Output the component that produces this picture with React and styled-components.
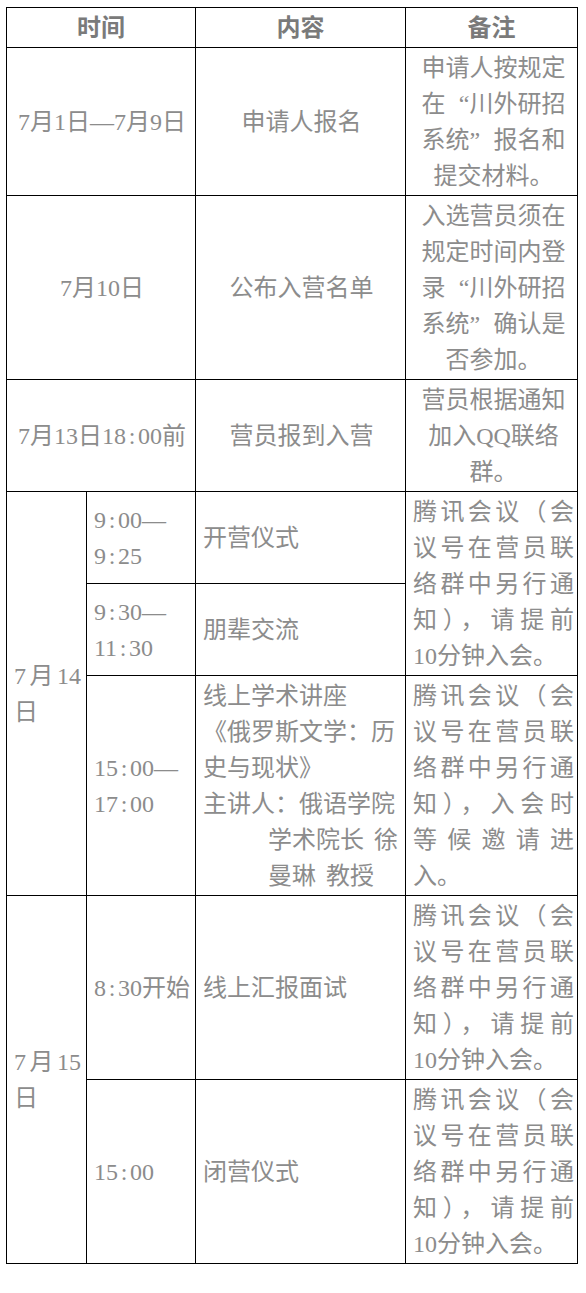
import React from "react";
import styled, { createGlobalStyle } from "styled-components";

const GlobalStyle = createGlobalStyle`
  body {
    margin: 0;
    background: #ffffff;
  }
`;

const Page = styled.div`
  padding: 7px 0 30px 6px;
`;

const Table = styled.table`
  border-collapse: collapse;
  table-layout: fixed;
  width: 571px;
  font-family: "Liberation Serif", "Noto Sans CJK SC", serif;
  font-size: 24px;
  line-height: 36px;
  color: #8c8c8c;
`;

const Th = styled.th`
  border: 1px solid #000;
  padding: 1.5px 4px;
  font-weight: 700;
  color: #7a7a7a;
  text-align: center;
  vertical-align: middle;
`;

const Td = styled.td`
  border: 1px solid #000;
  padding: 1.5px ${(p) => (p.$narrow ? "3px" : "5px")} 1.5px 7px;
  font-weight: 400;
  text-align: ${(p) => (p.$left ? "left" : "center")};
  vertical-align: middle;
  white-space: nowrap;
`;

const Line = styled.span`
  display: block;
  text-align-last: ${(p) => (p.$justify ? "justify" : "auto")};
  padding-left: ${(p) => p.$indent || 0}px;
`;

const Quote = styled.span`
  display: inline-block;
  width: 1em;
  text-align: ${(p) => (p.$open ? "right" : "left")};
`;

// half-width colon, as in the song-style font of the original
const Colon = styled.span`
  display: inline-block;
  width: 0.5em;
  text-align: center;
`;

const Gap = styled.span`
  display: inline-block;
  width: ${(p) => p.$w}px;
`;

const Time = ({ h, m, dash }) => (
  <>
    {h}
    <Colon>:</Colon>
    {m}
    {dash ? "—" : ""}
  </>
);

const MeetingNote = ({ last }) => (
  <>
    <Line $justify>腾讯会议（会</Line>
    <Line $justify>议号在营员联</Line>
    <Line $justify>络群中另行通</Line>
    {last === "wait" ? (
      <>
        <Line $justify>知），入会时</Line>
        <Line $justify>等候邀请进</Line>
        <Line>入。</Line>
      </>
    ) : (
      <>
        <Line $justify>知），请提前</Line>
        <Line>10分钟入会。</Line>
      </>
    )}
  </>
);

export default function App() {
  return (
    <Page>
      <GlobalStyle />
      <Table>
        <colgroup>
          <col style={{ width: 80 }} />
          <col style={{ width: 109 }} />
          <col style={{ width: 210 }} />
          <col style={{ width: 172 }} />
        </colgroup>
        <thead>
          <tr>
            <Th colSpan={2}>时间</Th>
            <Th>内容</Th>
            <Th>备注</Th>
          </tr>
        </thead>
        <tbody>
          <tr>
            <Td colSpan={2}>7月1日—7月9日</Td>
            <Td>申请人报名</Td>
            <Td $narrow>
              <Line>申请人按规定</Line>
              <Line>
                在<Quote $open>“</Quote>川外研招
              </Line>
              <Line>
                系统<Quote>”</Quote>报名和
              </Line>
              <Line>提交材料。</Line>
            </Td>
          </tr>
          <tr>
            <Td colSpan={2}>7月10日</Td>
            <Td>公布入营名单</Td>
            <Td $narrow>
              <Line>入选营员须在</Line>
              <Line>规定时间内登</Line>
              <Line>
                录<Quote $open>“</Quote>川外研招
              </Line>
              <Line>
                系统<Quote>”</Quote>确认是
              </Line>
              <Line>否参加。</Line>
            </Td>
          </tr>
          <tr>
            <Td colSpan={2}>
              7月13日<Time h="18" m="00" />前
            </Td>
            <Td>营员报到入营</Td>
            <Td $narrow>
              <Line>营员根据通知</Line>
              <Line>加入QQ联络</Line>
              <Line>群。</Line>
            </Td>
          </tr>
          <tr>
            <Td $left rowSpan={3}>
              <Line $justify>7月14</Line>
              <Line>日</Line>
            </Td>
            <Td $left>
              <Line>
                <Time h="9" m="00" dash />
              </Line>
              <Line>
                <Time h="9" m="25" />
              </Line>
            </Td>
            <Td $left>开营仪式</Td>
            <Td $left $narrow rowSpan={2}>
              <MeetingNote />
            </Td>
          </tr>
          <tr>
            <Td $left>
              <Line>
                <Time h="9" m="30" dash />
              </Line>
              <Line>
                <Time h="11" m="30" />
              </Line>
            </Td>
            <Td $left>朋辈交流</Td>
          </tr>
          <tr>
            <Td $left>
              <Line>
                <Time h="15" m="00" dash />
              </Line>
              <Line>
                <Time h="17" m="00" />
              </Line>
            </Td>
            <Td $left>
              <Line>线上学术讲座</Line>
              <Line>《俄罗斯文学：历</Line>
              <Line>史与现状》</Line>
              <Line>主讲人：俄语学院</Line>
              <Line $indent={65}>
                学术院长<Gap $w={10} />徐
              </Line>
              <Line $indent={65}>
                曼琳<Gap $w={10} />教授
              </Line>
            </Td>
            <Td $left $narrow>
              <MeetingNote last="wait" />
            </Td>
          </tr>
          <tr>
            <Td $left rowSpan={2}>
              <Line $justify>7月15</Line>
              <Line>日</Line>
            </Td>
            <Td $left>
              <Time h="8" m="30" />开始
            </Td>
            <Td $left>线上汇报面试</Td>
            <Td $left $narrow>
              <MeetingNote />
            </Td>
          </tr>
          <tr>
            <Td $left>
              <Time h="15" m="00" />
            </Td>
            <Td $left>闭营仪式</Td>
            <Td $left $narrow>
              <MeetingNote />
            </Td>
          </tr>
        </tbody>
      </Table>
    </Page>
  );
}
